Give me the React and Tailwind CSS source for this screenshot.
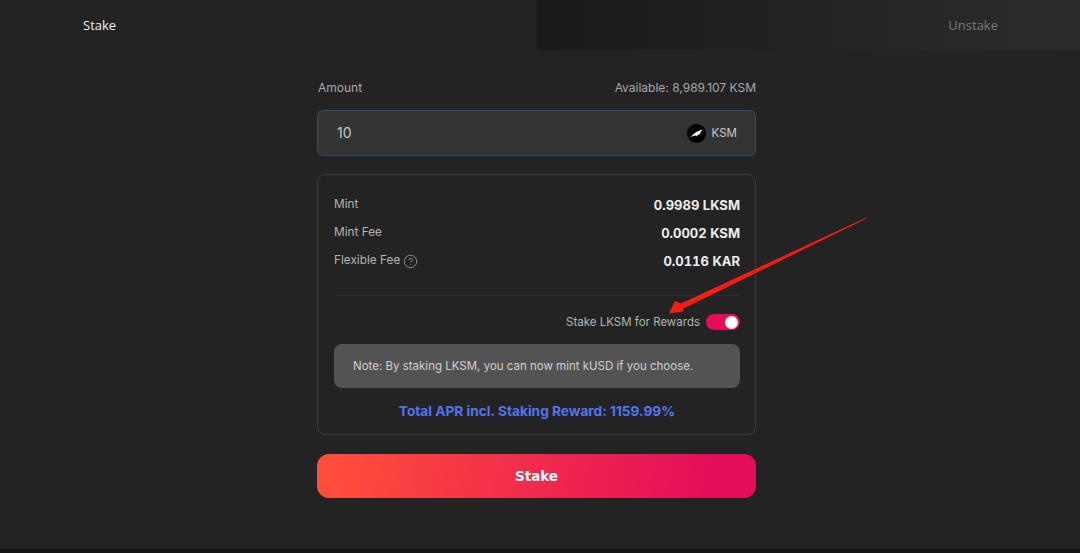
import { CircleHelp } from 'lucide-react';

const rows = [
  { label: 'Mint', value: '0.9989 LKSM' },
  { label: 'Mint Fee', value: '0.0002 KSM' },
  { label: 'Flexible Fee', value: '0.0116 KAR', help: true },
];

function KsmIcon() {
  return (
    <svg width="19" height="19" viewBox="0 0 19 19" className="shrink-0">
      <circle cx="9.5" cy="9.5" r="9.5" fill="#000" />
      <path d="M3.5 13.2 C6 10.6 8.5 8 11.5 7 C12.6 6.5 14 5.9 15.5 5.6 L14.2 7.2 C13.6 9.4 12.2 11 10 11.4 L9.4 12.6 L8.6 11.6 C7 11.8 5.2 12.4 3.5 13.2 Z" fill="#fff" />
    </svg>
  );
}

export default function App() {
  return (
    <div className="relative h-[553px] w-[1080px] overflow-hidden bg-[#232323] font-['Inter',sans-serif]">
      <div className="flex h-[50px]">
        <div className="flex w-[537px] items-center pl-[83px] pt-px font-['Open_Sans',sans-serif] text-[13px] text-[#f0f0f0]">Stake</div>
        <div className="flex flex-1 items-center justify-end bg-gradient-to-r from-[#1a1a1a] to-[#2c2c2c] pr-[82px] pt-px font-['Open_Sans',sans-serif] text-[13px] text-[#7a7a7a]">Unstake</div>
      </div>

      <div className="ml-[317px] w-[439px] pt-[31px]">
        <div className="flex items-center justify-between pl-px text-[12px] leading-[14px] text-[#a8a8a8]">
          <span>Amount</span>
          <span>Available: 8,989.107 KSM</span>
        </div>

        <div className="mt-[15px] flex h-[46px] items-center justify-between rounded-[6px] border border-[#34497f] bg-[#343434] pl-[19px] pr-[18px]">
          <span className="mb-[2px] text-[14px] text-[#c4c4c4]">10</span>
          <div className="flex items-center gap-[6px] text-[11.5px] text-[#c8c8c8]">
            <KsmIcon />
            <span className="mt-[2px]">KSM</span>
          </div>
        </div>

        <div className="mt-[18px] h-[261px] rounded-[8px] border border-[#3a3a3a] pl-[16px] pr-[15px] pt-[23px]">
          <div className="flex flex-col gap-[14px] border-b border-[#2b2b2b] pb-[27px]">
            {rows.map((row) => (
              <div key={row.label} className="flex h-[14px] items-center justify-between">
                <span className="flex items-center gap-[3px] text-[11.8px] text-[#b4b4b4]">
                  {row.label}
                  {row.help && <CircleHelp size={15} strokeWidth={1.6} className="text-[#8a8a8a]" />}
                </span>
                <span className="mt-[2px] text-[13px] font-bold tabular-nums text-[#ededed]">{row.value}</span>
              </div>
            ))}
          </div>

          <div className="mt-[18px] flex h-[16px] items-center justify-end gap-[6px]">
            <span className="mt-[2px] text-[11.5px] text-[#b4b4b4]">Stake LKSM for Rewards</span>
            <div className="flex h-[16px] w-[34px] items-center justify-end rounded-full bg-[#e40c5b] pr-[2px]">
              <div className="size-[13px] rounded-full bg-white" />
            </div>
          </div>

          <div className="mt-[14px] flex h-[44px] items-center rounded-[8px] bg-[#535353] pl-[19px] pt-[2px] text-[11.5px] text-[#d0d0d0]">
            Note: By staking LKSM, you can now mint kUSD if you choose.
          </div>

          <div className="mt-[13px] text-center text-[13.7px] font-bold text-[#5175ee]">
            Total APR incl. Staking Reward: 1159.99%
          </div>
        </div>

        <button
          type="button"
          className="mt-[19px] flex h-[44px] w-full items-center justify-center rounded-[12px] bg-[linear-gradient(100deg,#ff4c3b_5%,#e40c5b_90%)] font-['DejaVu_Sans',sans-serif] text-[13.5px] font-bold text-white"
        >
          Stake
        </button>
      </div>

      <div className="absolute inset-x-0 bottom-0 h-[4px] bg-[#141414]" />

      {/* red annotation arrow drawn on top of the screenshot */}
      <svg className="absolute left-0 top-0 pointer-events-none" width="1080" height="553" viewBox="0 0 1080 553">
        <polygon points="866.5,217.5 681,303.5 675,301 669,313.5 683,311.5 683.5,308.5 866.5,218.5" fill="#f81d14" />
      </svg>
    </div>
  );
}
